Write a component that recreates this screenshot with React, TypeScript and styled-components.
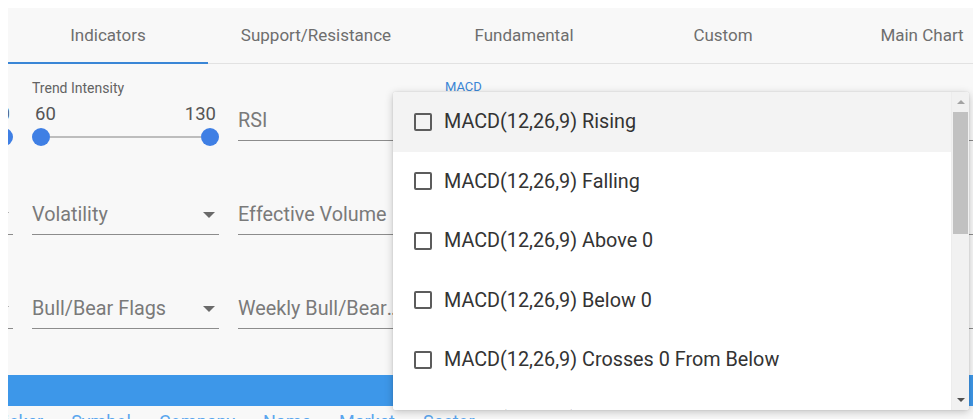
import React from "react";
import styled, { createGlobalStyle } from "styled-components";

const GlobalStyle = createGlobalStyle`
  html, body { margin: 0; padding: 0; background: #ffffff; }
  body { font-family: Roboto, "Noto Sans", Arial, sans-serif; -webkit-font-smoothing: antialiased; }
  * { box-sizing: border-box; }
`;

const Page = styled.div`
  width: 980px;
  height: 419px;
  padding: 8px 7px 0 8px;
  overflow: hidden;
`;

const Panel = styled.div`
  position: relative;
  height: 411px;
  background: #f8f8f8;
  overflow: hidden;
`;

const TabBar = styled.div`
  display: flex;
  height: 56px;
  border-bottom: 1px solid #e2e2e2;
`;

const Tab = styled.div<{ $w: number; $active?: boolean }>`
  flex: 0 0 ${(p) => p.$w}px;
  display: flex;
  align-items: center;
  justify-content: center;
  font-size: 17px;
  color: #6e6e6e;
  white-space: nowrap;
  position: relative;
  margin-bottom: -1px;
  border-bottom: 2px solid ${(p) => (p.$active ? "#3a86d6" : "transparent")};
`;

const Grid = styled.div`
  display: grid;
  grid-template-columns: repeat(6, 187px);
  grid-template-rows: repeat(3, 94px);
  column-gap: 19px;
  margin-left: -182px;
`;

const Cell = styled.div`
  display: flex;
  flex-direction: column;
  justify-content: flex-end;
  padding-bottom: 17px;
  min-width: 0;
`;

const SliderCell = styled.div`
  display: flex;
  flex-direction: column;
  padding-top: 15px;
`;

const SliderLabel = styled.div`
  font-size: 14px;
  line-height: 18px;
  color: #636363;
  white-space: nowrap;
`;

const SliderValues = styled.div`
  display: flex;
  justify-content: space-between;
  margin-top: 6px;
  padding: 0 3px;
  font-size: 18.5px;
  line-height: 22px;
  color: #555555;
`;

const SliderRow = styled.div`
  display: flex;
  align-items: center;
  height: 18px;
  margin-top: 3px;
`;

const Thumb = styled.div`
  flex: 0 0 18px;
  height: 18px;
  border-radius: 50%;
  background: #3f7fe4;
`;

const Track = styled.div`
  flex: 1;
  height: 2px;
  background: #bdbdbd;
`;

const Field = styled.div<{ $focused?: boolean }>`
  position: relative;
  display: flex;
  align-items: center;
  gap: 6px;
  padding-bottom: 8px;
  border-bottom: ${(p) => (p.$focused ? "2px solid #3a86d6" : "1px solid #8c8c8c")};
  font-size: 19.8px;
  line-height: 22px;
  color: #7a7a7a;
  white-space: nowrap;
`;

const FieldText = styled.span`
  flex: 1;
  min-width: 0;
  overflow: hidden;
  text-overflow: ellipsis;
`;

const FloatLabel = styled.div`
  position: absolute;
  left: 1px;
  top: -30px;
  font-size: 13px;
  line-height: 16px;
  color: #3a86d6;
`;

const FocusWrap = styled.div`
  position: relative;
`;

const Arrow = styled.span`
  flex: 0 0 auto;
  width: 0;
  height: 0;
  margin-right: 4px;
  border-left: 6px solid transparent;
  border-right: 6px solid transparent;
  border-top: 6px solid #6a6a6a;
`;

const BlueBar = styled.div`
  margin-top: 29px;
  height: 31px;
  background: #3d97e9;
`;

const HeaderRow = styled.div`
  display: flex;
  gap: 28px;
  margin-top: 5px;
  margin-left: -14px;
  font-size: 18px;
  line-height: 22px;
  color: #5aa6ee;
  white-space: nowrap;
`;

const Dropdown = styled.div`
  position: absolute;
  left: 385px;
  top: 84px;
  width: 576px;
  height: 318px;
  background: #ffffff;
  border-radius: 3px;
  box-shadow: 0 2px 8px rgba(0, 0, 0, 0.22), 0 0 2px rgba(0, 0, 0, 0.12);
  display: flex;
  overflow: hidden;
`;

const List = styled.div`
  flex: 1;
  display: flex;
  flex-direction: column;
`;

const Item = styled.div<{ $hover?: boolean }>`
  flex: 0 0 59.5px;
  display: flex;
  align-items: center;
  gap: 12px;
  padding-left: 21px;
  background: ${(p) => (p.$hover ? "#f3f3f3" : "#ffffff")};
  font-size: 19.8px;
  color: #333333;
  white-space: nowrap;
`;

const Box = styled.span`
  flex: 0 0 18px;
  height: 18px;
  border: 2px solid #5c5c5c;
  border-radius: 2px;
`;

const ScrollBar = styled.div`
  flex: 0 0 18px;
  display: flex;
  flex-direction: column;
  align-items: center;
  background: #f1f1f1;
  border-left: 1px solid #ececec;
`;

const ScrollBtn = styled.div`
  flex: 0 0 20px;
  width: 100%;
  display: flex;
  align-items: center;
  justify-content: center;
`;

const TriUp = styled.span`
  width: 0;
  height: 0;
  border-left: 4px solid transparent;
  border-right: 4px solid transparent;
  border-bottom: 4px solid #a3a3a3;
`;

const TriDown = styled.span`
  width: 0;
  height: 0;
  border-left: 4px solid transparent;
  border-right: 4px solid transparent;
  border-top: 4px solid #505050;
`;

const ScrollThumb = styled.div`
  flex: 0 0 122px;
  width: 15px;
  background: #c1c1c1;
`;

const ScrollTrack = styled.div`
  flex: 1;
`;

function Slider({ label, min, max }: { label: string; min: string; max: string }) {
  return (
    <SliderCell>
      <SliderLabel>{label}</SliderLabel>
      <SliderValues>
        <span>{min}</span>
        <span>{max}</span>
      </SliderValues>
      <SliderRow>
        <Thumb />
        <Track />
        <Thumb />
      </SliderRow>
    </SliderCell>
  );
}

function Select({ text }: { text: string }) {
  return (
    <Cell>
      <Field>
        <FieldText>{text}</FieldText>
        <Arrow />
      </Field>
    </Cell>
  );
}

const items = [
  "MACD(12,26,9) Rising",
  "MACD(12,26,9) Falling",
  "MACD(12,26,9) Above 0",
  "MACD(12,26,9) Below 0",
  "MACD(12,26,9) Crosses 0 From Below",
  "MACD(12,26,9) Crosses 0 From Above",
];

export default function App() {
  return (
    <>
      <GlobalStyle />
      <Page>
        <Panel>
          <TabBar>
            <Tab $w={200} $active>Indicators</Tab>
            <Tab $w={216}>Support/Resistance</Tab>
            <Tab $w={200}>Fundamental</Tab>
            <Tab $w={198}>Custom</Tab>
            <Tab $w={200}>Main Chart</Tab>
          </TabBar>
          <Grid>
            <Slider label="Price" min="10" max="100" />
            <Slider label="Trend Intensity" min="60" max="130" />
            <Select text="RSI" />
            <Cell>
              <FocusWrap>
                <FloatLabel>MACD</FloatLabel>
                <Field $focused>
                  <FieldText>&nbsp;</FieldText>
                  <Arrow />
                </Field>
              </FocusWrap>
            </Cell>
            <Select text="Stochastics" />
            <Select text="ADX" />

            <Select text="Volume" />
            <Select text="Volatility" />
            <Select text="Effective Volume" />
            <Select text="Moving Averages" />
            <Select text="Candlesticks" />
            <Select text="Gaps" />

            <Select text="Patterns" />
            <Select text="Bull/Bear Flags" />
            <Select text="Weekly Bull/Bear Flags" />
            <Select text="Channels" />
            <Select text="Breakouts" />
            <Select text="Trends" />
          </Grid>
          <BlueBar />
          <HeaderRow>
            <span>Ticker</span>
            <span>Symbol</span>
            <span>Company</span>
            <span>Name</span>
            <span>Market</span>
            <span>Sector</span>
          </HeaderRow>
          <Dropdown>
            <List>
              {items.map((t, i) => (
                <Item key={t} $hover={i === 0}>
                  <Box />
                  <span>{t}</span>
                </Item>
              ))}
            </List>
            <ScrollBar>
              <ScrollBtn>
                <TriUp />
              </ScrollBtn>
              <ScrollThumb />
              <ScrollTrack />
              <ScrollBtn>
                <TriDown />
              </ScrollBtn>
            </ScrollBar>
          </Dropdown>
        </Panel>
      </Page>
    </>
  );
}
